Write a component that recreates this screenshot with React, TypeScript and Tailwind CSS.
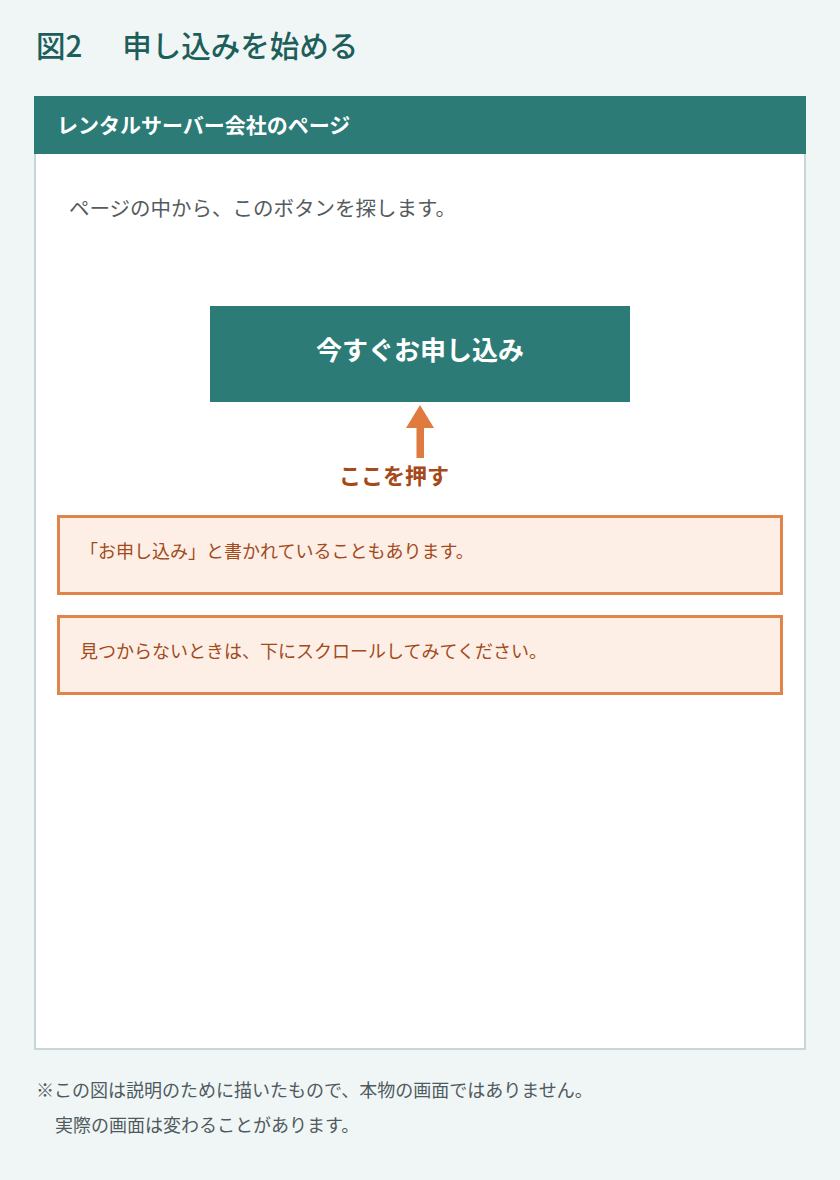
const jp = { fontFamily: '"Noto Sans CJK JP", "Noto Sans", sans-serif' }

function Note({ children }: { children: React.ReactNode }) {
    return (
        <div className="h-[80px] border-[3px] border-[#e0844a] bg-[#fdefe6] pl-[20px] pt-[18px] text-[18px] leading-[28px] text-[#a24a1c]">
            {children}
        </div>
    )
}

export default function App() {
    return (
        <div className="min-h-[1180px] bg-[#f0f6f6] px-[34px] pt-[22px]" style={jp}>
            {/* Title */}
            <h1 className="flex pl-[2px] text-[29.5px] font-medium leading-[44px] text-[#1e5e5a]">
                <span>図2</span>
                <span className="ml-[40px]">申し込みを始める</span>
            </h1>

            {/* Mock page */}
            <div className="mt-[30px] h-[954px] border-2 border-t-0 border-[#c9d6d8] bg-white">
                <div className="-mx-[2px] flex h-[58px] items-center bg-[#2c7b77] pl-[23px] text-[21px] font-bold text-white">
                    レンタルサーバー会社のページ
                </div>

                <div className="px-[21px]">
                    <p className="pl-[12px] pt-[38px] text-[20.5px] leading-[30px] text-[#555b5e]">
                        ページの中から、このボタンを探します。
                    </p>

                    <div className="mt-[84px] flex justify-center">
                        <div className="flex h-[96px] w-[420px] items-center justify-center bg-[#2c7b77] pb-[12px] text-[26px] font-bold text-white">
                            今すぐお申し込み
                        </div>
                    </div>

                    {/* Arrow */}
                    <div className="mt-[3px] flex justify-center">
                        <svg width="28" height="53" viewBox="0 0 28 53">
                            <polygon points="14,0 0,23 28,23" fill="#e07b3f" />
                            <rect x="10.5" y="22" width="7.5" height="31" fill="#e07b3f" />
                        </svg>
                    </div>
                    <div className="flex justify-center">
                        <span className="mr-[52px] text-[22px] font-bold leading-[32px] text-[#a5491a]">
                            ここを押す
                        </span>
                    </div>

                    <div className="mt-[25px] flex flex-col gap-[20px]">
                        <Note>「お申し込み」と書かれていることもあります。</Note>
                        <Note>見つからないときは、下にスクロールしてみてください。</Note>
                    </div>
                </div>
            </div>

            {/* Footnote */}
            <div className="mt-[22px] pl-[2px] text-[18px] leading-[35px] text-[#4f5a5e]">
                <p>※この図は説明のために描いたもので、本物の画面ではありません。</p>
                <p className="pl-[19px]">実際の画面は変わることがあります。</p>
            </div>
        </div>
    )
}
